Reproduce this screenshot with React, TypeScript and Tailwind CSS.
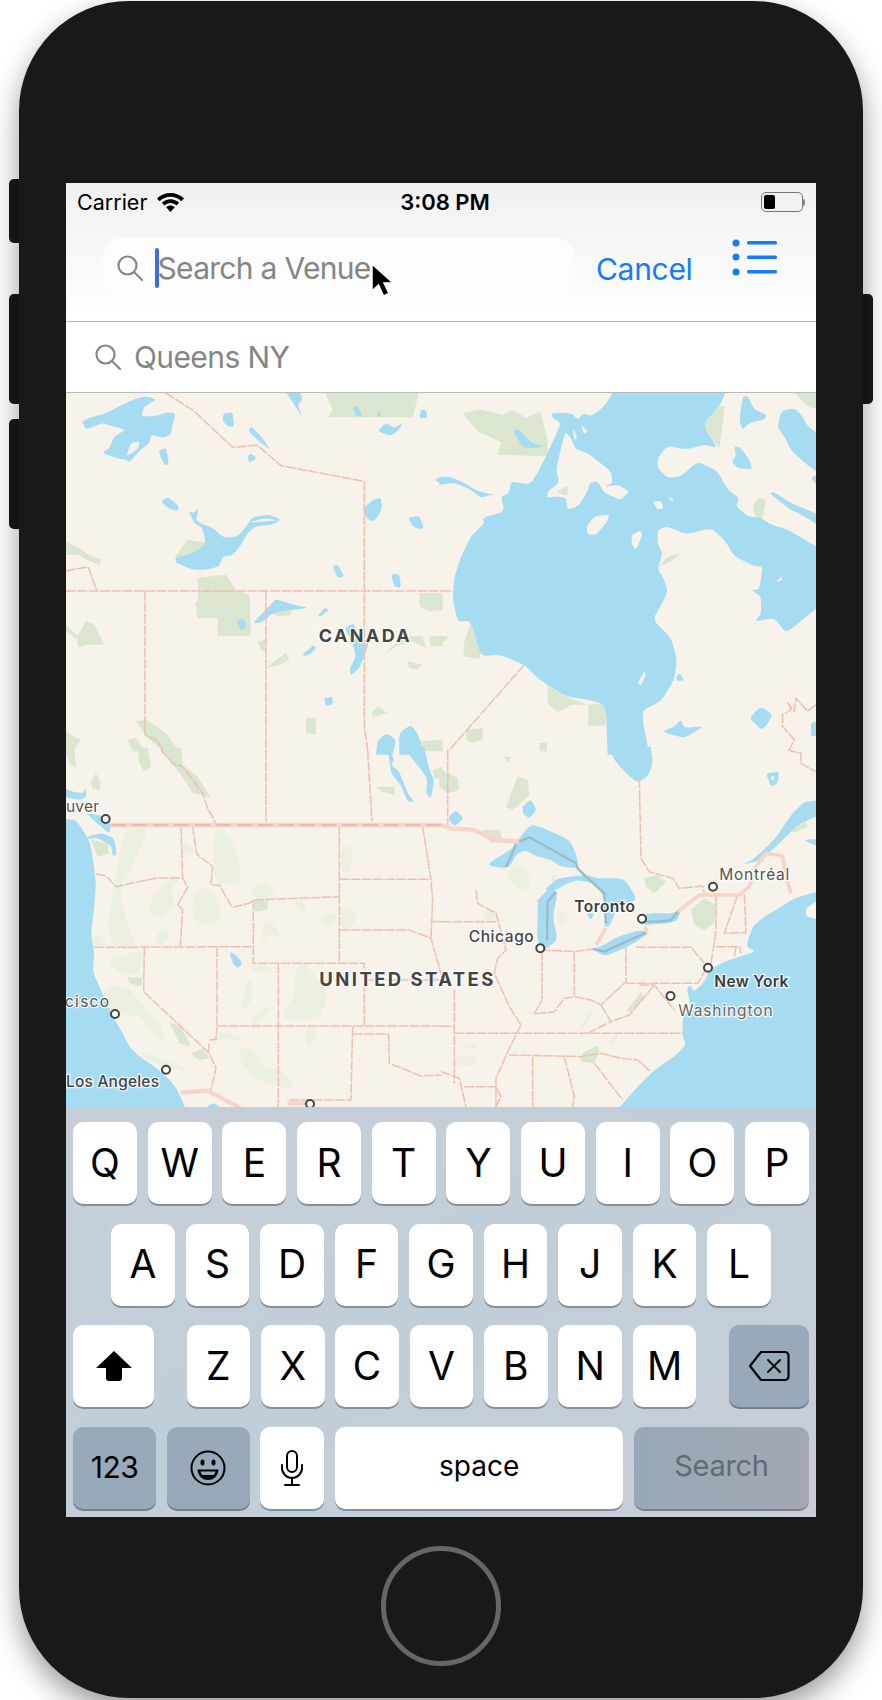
type Quad = {
  dx: number;
  dy: number;
  pale?: string[];
  green?: string[];
  water: string[];
  land?: string[];
  top?: string[];
  lines: string[];
};

// map traced per quadrant, coordinates are 3x the map's pixels
const NW: Quad = {
  dx: 0,
  dy: 0,
  green: [
    "775,-5 1060,-5 1040,73 785,73 800,50",
    "-5,445 40,465 75,490 105,500 100,515 60,500 40,485 -5,485",
    "395,555 480,545 510,590 550,605 555,728 455,728 455,675 395,675 388,630 397,620",
    "-5,690 35,730 60,685 85,695 115,755 65,755 35,762 35,740 -5,710",
    "575,745 600,740 600,780 585,770",
    "600,825 660,780 670,800 640,815",
    "1060,600 1130,600 1130,650 1090,655 1060,640",
    "720,975 750,975 750,1025 720,1020",
    "1090,730 1130,728 1130,760 1095,760",
    "955,785 1010,730 1070,730 1080,765 1040,745 990,760",
    "1025,805 1070,815 1055,830 1030,825",
    "918,960 935,940 965,960 920,972",
    "210,985 240,980 300,1020 340,1075 290,1075 240,1030",
    "185,1040 210,1035 235,1075 200,1075",
    "-5,1010 20,1030 45,1040 20,1075 -5,1075",
    "1060,1045 1130,1040 1130,1075 1070,1075",
    "325,495 365,440 425,450 390,490",
    "620,660 680,650 670,668 630,668",
  ],
  water: [
    "47,85 70,75 120,60 180,30 215,15 245,10 272,20 235,40 225,70 270,70 300,58 328,60 320,95 315,125 290,135 255,125 250,150 225,170 190,208 180,200 160,198 108,180 130,165 145,130 180,110 140,100 110,90 60,110",
    "472,62 500,58 505,100 490,102 470,85",
    "547,115 555,100 590,135 612,170 585,150",
    "545,190 555,182 572,195 550,210",
    "278,172 300,165 305,190 308,215 295,215 285,195",
    "655,-10 700,-10 710,20 695,35 708,72 685,35",
    "285,325 305,312 335,335 338,355 305,345",
    "368,355 385,360 398,345 390,385 440,405 475,435 515,430 545,395 560,372 610,365 645,380 620,395 570,400 545,420 525,455 500,487 470,490 460,520 420,530 380,530 330,510 328,495 380,480 420,455 410,405 385,390",
    "890,350 915,325 945,312 948,350 925,385 905,380",
    "1025,375 1060,368 1075,408 1045,405",
    "800,520 815,515 835,550 815,555",
    "975,545 1000,542 1005,585 985,580",
    "1105,260 1130,250 1130,275",
    "560,690 610,640 630,618 680,635 730,645 680,650 620,660 585,690",
    "755,670 775,645 790,650 765,670",
    "512,680 535,678 542,700 525,715",
    "708,785 745,755 750,770 720,790",
    "835,705 865,690 870,730 910,745 895,790 880,825 855,848 850,830 870,790 860,750",
    "775,915 800,912 800,935 780,940",
    "934,1045 960,1020 990,1040 980,1085 930,1085",
    "1000,1020 1035,995 1060,1030 1070,1085 1000,1085",
    "860,40 875,40 890,70 870,70",
    "938,50 945,70 935,70",
    "1065,50 1080,50 1085,75 1060,75",
    "935,115 960,90 985,105 1010,90 1000,110 975,128",
  ],
  land: ["180,190 195,150 222,145 215,170", "550,388 600,375 635,382 590,386"],
  lines: [
    "300,0 385,55 500,163 575,157 645,218 895,265 895,1000 905,1071",
    "0,594 1125,594",
    "237,594 237,1025 275,1045 290,1071",
    "600,594 600,1071",
    "0,533 67,522 92,594",
  ],
};

const NE: Quad = {
  dx: 375,
  dy: 0,
  green: [
    "65,60 120,50 185,65 215,50 255,75 298,55 318,135 322,190 170,185 180,148 110,115",
    "785,95 835,40 852,40 835,165",
    "1055,-5 1130,-5 1130,50 1100,40",
    "935,340 950,315 975,320 965,375 945,375",
    "68,755 90,685 120,770 115,798 68,790",
    "-5,730 25,730 -5,760",
    "320,880 375,910 440,935 495,930 495,998 442,998 442,935 390,935 350,958 320,930",
    "75,1010 125,1005 125,1040 90,1050 75,1040",
    "295,1050 318,1050 318,1075 295,1075",
  ],
  water: [
    "525,-15 490,40 450,70 430,60 410,80 390,60 335,60 330,70 360,90 345,125 320,180 290,240 265,275 210,265 205,300 180,310 190,355 125,375 130,390 90,430 65,480 40,550 35,620 50,685 90,685 120,790 175,785 250,815 290,855 325,880 375,910 440,920 495,935 500,1085 625,1085 600,955 660,925 700,860 708,800 690,735 635,680 670,620 680,590 665,550 650,530 665,480 650,455 650,410 680,400 735,425 810,405 850,440 880,490 940,520 965,520 955,590 930,590 960,610 960,665 940,685 1000,675 1035,720 1085,680 1145,630 1145,470 1090,440 1040,410 990,395 960,375 920,370 885,340 895,315 860,290 830,235 770,205 720,250 680,255 650,225 650,195 680,158 735,170 790,155 830,165 785,95 835,40 860,-15",
    "985,300 1000,298 1050,330 1145,370 1145,405 1090,370 1040,345",
    "905,10 920,10 940,50 978,65 970,80 925,90 905,110 895,85",
    "880,160 900,165 925,200 935,230 890,225 872,205 885,190",
    "1020,55 1060,45 1085,70 1100,100 1145,130 1145,250 1085,205 1050,170 1030,130 1010,105",
    "1110,255 1130,245 1130,280",
    "-5,255 25,250 70,270 110,295 190,312 150,305 120,315 90,290 40,270 -5,275",
    "925,975 960,940 995,965 975,1000 960,1010",
    "665,1015 700,1000 720,980 730,1005 790,1000 730,1035 690,1025",
    "1110,990 1130,985 1130,1030 1110,1030",
    "705,855 715,840 730,862 710,865",
  ],
  land: [
    "372,115 390,135 405,170 440,180 510,235 515,270 490,282 530,275 565,295 540,322 490,300 470,265 445,270 440,295 412,340 380,350 375,315 345,310 318,315 320,295 355,270 345,230",
    "395,105 410,135 400,140",
    "420,95 440,115 430,122",
    "437,400 460,370 505,365 500,385 465,425 440,425",
    "572,425 600,412 603,430 585,470 572,455",
    "635,325 660,325 668,345 650,350",
    "678,310 698,320 695,328",
    "1005,565 1025,550 1020,565",
    "590,870 610,835 615,845 600,878",
  ],
  top: [
    "345,295 380,278 380,310",
    "650,525 680,490 718,482 690,505",
    "215,110 235,110 270,150 310,160 290,165 245,165",
  ],
  lines: [
    "250,815 25,1071",
    "0,594 35,594",
    "1125,935 1100,955 1065,915 1060,955 1040,930 1050,950 1025,965 1025,1000 1060,1040 1045,1071",
  ],
};

const SW: Quad = {
  dx: 0,
  dy: 357,
  pale: [
    "175,230 245,230 235,270 205,330 185,380 160,410 175,500 205,580 225,600 175,600 135,580 125,520 140,430 150,370",
    "355,270 380,290 385,310 345,320",
    "445,230 480,240 510,300 530,390 505,400 440,400",
    "240,480 290,400 325,375 345,385 310,420 330,460 280,510",
    "380,440 420,400 450,440 470,505 410,530 380,500",
    "75,550 110,560 120,590 85,590",
    "265,560 300,530 315,570 270,590",
    "130,630 190,610 230,600 225,660 190,680 130,650",
    "550,410 610,400 630,440 565,450",
    "680,450 715,450 720,490 690,470",
    "760,510 810,480 810,525 770,530",
    "820,470 850,480 880,490 850,540 825,540",
    "825,285 865,290 850,370 825,370",
    "590,510 620,520 650,565 610,550 575,590 590,570",
    "550,640 610,650 620,665 560,665",
    "680,690 710,620 730,660 790,730 770,780 760,800 720,810 650,810 650,780 690,740",
    "715,830 755,830 745,880 720,890",
    "540,690 560,695 560,760 520,780 535,730",
    "545,815 610,760 615,785 570,825",
    "425,880 460,840 535,865 530,880 480,860 450,880",
    "510,900 560,890 590,960 640,950 690,1020 650,1010 590,1000 540,960",
    "105,720 180,700 240,780 290,830 300,880 270,860 220,790 170,800 130,760",
    "215,900 260,920 360,950 350,965 290,945 240,930",
  ],
  green: [
    "215,-5 245,-5 255,50 235,65 220,40",
    "-5,-5 25,-5 30,55 10,40",
    "75,95 90,70 105,100 100,120 80,115",
    "285,-5 345,-5 350,45 395,80 435,145 410,135 380,130 350,80 310,30",
    "930,110 985,110 985,135 950,125",
    "1100,60 1130,50 1130,90 1105,85",
    "75,270 125,280 130,310 95,320",
    "565,450 605,450 605,480 565,485",
    "185,680 230,685 225,710 190,700",
    "310,815 345,830 375,890 340,880",
    "375,910 410,895 430,925 400,930",
  ],
  water: [
    "-15,205 30,210 70,270 80,320 90,400 85,470 75,550 85,610 80,665 105,720 135,790 170,850 190,890 220,920 280,960 330,1010 365,1090 -15,1090",
    "-5,115 20,125 50,130 58,115 62,140 40,150 15,145 -5,140",
    "60,190 95,195 120,200 135,225 130,250 105,230",
    "65,258 110,250 145,265 152,315 140,318 135,285 90,262 70,268",
    "490,605 510,615 530,640 515,655 500,640",
    "965,-10 985,30 975,45 1000,65 1025,130 1045,155 1025,155 1005,105 975,70",
    "1010,-10 1075,-10 1090,60 1105,90 1095,145 1080,130 1085,85 1050,40",
    "425,1065 450,1060 470,1085 430,1085",
  ],
  lines: [
    "90,372 120,378 150,410 270,384 350,384 365,412 335,465 350,480 343,590",
    "345,228 350,384",
    "380,228 392,312 440,350 435,405 460,405 498,472 550,460 562,450 820,440",
    "820,228 820,640",
    "820,388 1090,388",
    "820,540 1030,540 1095,565 1125,670",
    "1070,228 1095,388 1100,450 1095,565",
    "1100,515 1125,515",
    "562,450 562,640 895,640 895,830",
    "85,592 560,590",
    "235,592 233,725 430,910 450,955 435,1020",
    "453,592 453,828",
    "453,828 1125,828",
    "637,640 637,1071",
    "860,830 855,1050 665,1050",
    "860,852 968,852 970,940 1065,978 1125,975",
    "600,0 600,215",
    "905,0 918,215",
    "285,0 320,40 350,50 410,130 425,175 450,220",
    "430,880 425,915",
    "430,870 450,868 453,830",
    "895,690 1125,690",
  ],
};

const SE: Quad = {
  dx: 375,
  dy: 357,
  pale: [
    "205,345 260,345 270,430 200,400",
    "340,365 350,390 325,400",
    "345,470 380,500 370,525 350,525",
    "130,470 160,490 165,510 130,515",
    "410,840 460,765 450,800 425,840",
    "60,880 110,880 110,895 60,895",
    "40,920 110,915 100,945 50,950",
    "500,885 520,850 540,835 515,885",
  ],
  green: [
    "750,480 790,445 825,465 820,520 790,540 760,525",
    "610,385 650,375 675,395 640,430 615,410",
    "195,170 230,80 260,90 265,135 215,180",
    "-5,55 50,85 55,120 20,130 -5,110",
    "125,240 175,240 185,265 150,280",
    "190,20 210,20 200,40",
    "555,785 600,725 610,750 565,785",
    "425,910 470,885 475,905 460,940 420,935",
    "1045,240 1095,215 1100,230 1060,248",
  ],
  water: [
    "1145,420 1060,445 1005,480 970,500 935,530 915,590 945,605 880,625 840,640 805,660 790,695 760,725 745,705 738,720 750,770 725,800 725,860 735,885 700,920 640,960 590,1010 520,1090 1145,1090",
    "505,-10 630,-10 635,40 620,80 590,98 555,70 520,30",
    "245,170 270,148 287,180 265,205 245,190",
    "20,205 45,180 68,205 40,230",
    "975,70 1015,65 1010,100 990,110",
    "1145,150 1090,155 1050,195 1000,270 940,325 905,345 960,330 1020,275 1070,225 1145,190",
    "1145,265 1085,270 1145,295",
    "135,345 215,295 235,265 270,222 320,240 385,270 400,300 410,330 410,355 360,350 330,330 290,320 250,300 225,315 205,350 190,355",
    "290,460 335,420 350,430 335,500 350,570 310,600 288,570 290,510",
    "285,455 325,415 345,420 300,465",
    "310,420 350,385 400,378 440,375 470,385 550,385 590,450 530,470 520,495 505,530 490,530 490,440 460,400 410,390 370,405 345,420",
    "455,595 480,590 530,560 600,540 625,550 560,590 490,620",
    "590,510 620,490 690,490 720,480 710,510 680,520 610,525",
    "435,490 460,490 450,510",
  ],
  land: ["1145,440 1095,475 1095,500 1145,510", "988,80 1002,78 996,94"],
  lines: [
    "20,0 20,225",
    "595,85 600,325 625,365 695,385 715,415 785,408 790,430",
    "825,440 825,545 810,640",
    "890,435 850,550 915,548 910,430",
    "825,590 895,590 900,610",
    "885,590 880,622",
    "0,515 165,515",
    "105,420 110,460 165,490 195,600 170,625 160,670 205,770 240,825",
    "300,600 400,605 455,597",
    "303,600 303,750 280,792 340,785 370,745 400,740 450,750 480,765 555,695 555,590",
    "585,592 750,592 790,640",
    "555,700 770,700 800,650",
    "595,705 640,705 700,780",
    "400,605 400,740",
    "480,765 510,815 565,795 640,705",
    "440,850 510,815",
    "240,825 205,895 165,985 165,1071",
    "40,850 725,850",
    "0,828 40,830",
    "40,720 40,1000",
    "205,915 420,920 480,910 540,925 590,930 630,965",
    "275,920 275,1071",
    "370,920 400,1040 395,1071",
    "460,940 545,1050",
    "0,965 55,985 75,1071",
    "70,1010 165,1010 180,1040 165,1071",
    "1040,0 1080,10 1080,40 1125,65",
  ],
};

const CITIES = [
  [39.7, 426],
  [474.3, 555.3],
  [576, 525.7],
  [647, 493.7],
  [642, 574.7],
  [604.5, 603],
  [49, 621],
  [100, 676.7],
  [244, 711],
];

const ROW_1 = ["Q", "W", "E", "R", "T", "Y", "U", "I", "O", "P"];
const ROW_2 = ["A", "S", "D", "F", "G", "H", "J", "K", "L"];
const ROW_3 = ["Z", "X", "C", "V", "B", "N", "M"];

// rounds the corners of a traced shape, points off the map stay sharp
const smooth = (points: string, t: number) => {
  const pts = points.split(" ").map((p) => p.split(",").map(Number));
  const off = (p: number[]) => p[0] < 0 || p[0] > 1125 || p[1] < 0 || p[1] > 1071;
  const lerp = (a: number[], b: number[], k: number) => `${a[0] + (b[0] - a[0]) * k} ${a[1] + (b[1] - a[1]) * k}`;
  let d = "";
  pts.forEach((p, i) => {
    const prev = pts[(i - 1 + pts.length) % pts.length];
    const next = pts[(i + 1) % pts.length];
    if (off(p)) {
      d += `${d ? "L" : "M"}${p[0]} ${p[1]}`;
    } else {
      d += `${d ? "L" : "M"}${lerp(p, prev, t)}Q${p[0]} ${p[1]} ${lerp(p, next, t)}`;
    }
  });
  return d + "Z";
};

const Soft = ({ items, fill, t }: { items?: string[]; fill: string; t: number }) => (
  <>
    {items?.map((p) => (
      <path key={p} d={smooth(p, t)} fill={fill} />
    ))}
  </>
);

const Lines = ({ items, stroke, width, dash }: { items: string[]; stroke: string; width: number; dash?: string }) => (
  <>
    {items.map((p) => (
      <polyline
        key={p}
        points={p}
        fill="none"
        stroke={stroke}
        strokeWidth={width}
        strokeDasharray={dash}
        strokeLinejoin="round"
      />
    ))}
  </>
);

const Layer = ({ q }: { q: Quad }) => (
  <g transform={`translate(${q.dx} ${q.dy}) scale(0.3333)`}>
    <Soft items={q.pale} fill="#ebf0e0" t={0.5} />
    {q.green?.map((p) => (
      <polygon key={p} points={p} fill="#dae6cf" />
    ))}
    <Soft items={q.water} fill="#a5dcf2" t={0.28} />
    <Soft items={q.land} fill="#f7f2ea" t={0.28} />
  </g>
);

const LayerLines = ({ q }: { q: Quad }) => (
  <g transform={`translate(${q.dx} ${q.dy}) scale(0.3333)`}>
    {q.top?.map((p, i) => (
      <path key={p} d={smooth(p, 0.28)} fill={i === 2 ? "#a5dcf2" : "#dae6cf"} />
    ))}
    <Lines items={q.lines} stroke="#efbfb2" width={4.5} dash="30 4" />
  </g>
);

const Label = ({ x, y, size, weight, fill, width, children }: any) => (
  <text
    x={x}
    y={y}
    fontFamily="Inter, sans-serif"
    fontSize={size}
    fontWeight={weight}
    fill={fill}
    textLength={width}
    stroke="#ffffff"
    strokeOpacity={0.85}
    strokeWidth={2.5}
    paintOrder="stroke"
  >
    {children}
  </text>
);

const MapView = () => (
  <svg width="750" height="714" viewBox="0 0 750 714" className="block shrink-0">
    <rect width="750" height="714" fill="#f7f2ea" />
    <Layer q={NW} />
    <Layer q={NE} />
    <Layer q={SW} />
    <Layer q={SE} />
    <LayerLines q={NW} />
    <LayerLines q={NE} />
    <LayerLines q={SW} />
    <LayerLines q={SE} />
    {/* border with the States, grey where it runs through the lakes */}
    <g transform="translate(0 357) scale(0.3333)" fill="none">
      <Lines items={["135,225 1125,225 1155,235 1225,240 1285,270 1360,275", "345,1028 425,1022 525,1075", "665,1060 725,1060"]} stroke="#f7d3c9" width={13} />
      <Lines items={["135,225 1125,225"]} stroke="#eeb0a4" width={4} dash="45 18" />
    </g>
    <g transform="translate(375 357) scale(0.3333)" fill="none">
      <Lines items={["710,485 775,435 895,435 925,410 945,350 975,310 1025,318 1035,380 1050,430", "465,585 495,535", "610,530 620,545"]} stroke="#f7d3c9" width={11} />
      <Lines
        items={[
          "235,275 265,262 405,340 410,355 435,380 490,430 495,520",
          "455,597 490,605 615,548",
          "600,515 650,515 690,510 710,485",
          "345,425 320,455 318,570",
          "225,280 210,320 195,350",
        ]}
        stroke="#9fb9c9"
        width={7}
      />
    </g>
    {CITIES.map(([x, y]) => (
      <circle key={x} cx={x} cy={y} r={4} fill="#ffffff" stroke="#444444" strokeWidth={2} />
    ))}
    <Label x={252.7} y={249} size={18} weight={700} fill="#444444" width={91}>CANADA</Label>
    <Label x={253.3} y={593} size={18.5} weight={700} fill="#444444" width={174}>UNITED STATES</Label>
    <Label x={402.7} y={548.7} size={15.5} weight={500} fill="#444444" width={65}>Chicago</Label>
    <Label x={508.3} y={519.3} size={15.5} weight={600} fill="#3a3a3a" width={60.7}>Toronto</Label>
    <Label x={653.3} y={487} size={15.5} weight={400} fill="#555555" width={70}>Montréal</Label>
    <Label x={648.3} y={593.7} size={15.5} weight={600} fill="#3a3a3a" width={74}>New York</Label>
    <Label x={612.3} y={622.7} size={15.5} weight={400} fill="#666666" width={94.3}>Washington</Label>
    <Label x={0} y={693.7} size={15.5} weight={500} fill="#444444" width={93}>Los Angeles</Label>
    <Label x={-1} y={614.3} size={15.5} weight={400} fill="#555555" width={44}>cisco</Label>
    <Label x={0} y={418.7} size={15.5} weight={400} fill="#555555" width={33}>uver</Label>
  </svg>
);

const SearchIcon = () => (
  <svg width="26" height="26" viewBox="0 0 26 26" fill="none" stroke="#868686" strokeWidth="2.2" strokeLinecap="round" className="shrink-0">
    <circle cx="10.5" cy="10.5" r="9" />
    <path d="M17 17l8 8" />
  </svg>
);

const Key = ({ label }: { label: string }) => (
  <div className="flex-1 flex items-center justify-center h-full bg-white rounded-[10px] shadow-[0_2px_0_#868e96]">
    <span className="text-[39px] leading-none text-black pb-[2px]">{label}</span>
  </div>
);

export default function App() {
  return (
    <div className="relative w-[882px] h-[1700px] bg-white overflow-hidden font-[Inter,sans-serif]">
      {/* side buttons */}
      <div className="absolute left-[9px] top-[179px] w-[12px] h-[64px] bg-[#191919] rounded-l-[5px]" />
      <div className="absolute left-[9px] top-[294px] w-[12px] h-[110px] bg-[#191919] rounded-l-[5px]" />
      <div className="absolute left-[9px] top-[419px] w-[12px] h-[110px] bg-[#191919] rounded-l-[5px]" />
      <div className="absolute left-[861px] top-[294px] w-[12px] h-[110px] bg-[#191919] rounded-r-[5px]" />

      <div className="relative ml-[19px] mt-[1px] w-[844px] h-[1697px] bg-[#191919] rounded-[110px] shadow-[0_12px_28px_rgba(0,0,0,0.4)] pt-[182px]">
        <div className="relative mx-auto w-[750px] h-[1334px] flex flex-col overflow-hidden bg-white">
          {/* nav */}
          <div className="h-[139px] shrink-0 bg-gradient-to-b from-[#f0f0f0] to-white border-b border-[#b9b9bc]">
            <div className="grid grid-cols-3 items-center h-[38px] pl-[11px] pr-[11px] text-[21.5px] text-black">
              <div className="flex items-center gap-[10px]">
                <span>Carrier</span>
                <svg width="27" height="19" viewBox="0 0 27 19" fill="#000">
                  <path d="M13.5 0C8.3 0 3.7 2 0 5.4l2.6 2.8C5.600 5.400 9.300 3.700 13.500 3.700s7.900 1.700 10.900 4.500L27 5.400C23.300 2 18.700 0 13.500 0z" />
                  <path d="M13.500 6.300c-3.300 0-6.300 1.300-8.600 3.400l2.600 2.800c1.600-1.500 3.700-2.400 6-2.400s4.400.9 6 2.400l2.600-2.800c-2.300-2.100-5.300-3.400-8.600-3.400z" />
                  <path d="M13.500 12.600c-1.700 0-3.200.7-4.300 1.700l4.300 4.700 4.300-4.700c-1.100-1-2.600-1.700-4.300-1.700z" />
                </svg>
              </div>
              <div className="text-center text-[22px] font-semibold pl-[8px]">3:08 PM</div>
              <div className="flex justify-end items-center">
                <div className="w-[42px] h-[20px] rounded-[5px] border border-[#777] p-[2px]">
                  <div className="w-[11px] h-full bg-black rounded-[2px]" />
                </div>
                <div className="w-[2px] h-[7px] bg-[#888] rounded-r-[2px]" />
              </div>
            </div>
            <div className="relative flex items-start mt-[17px] ml-[37px]">
              <div className="flex items-center w-[472px] h-[64px] bg-[#fdfdfd] rounded-[20px] pl-[14px] pb-[4px]">
                <SearchIcon />
                <div className="w-[3.500px] h-[40px] ml-[12px] bg-[#3a6ee8] rounded-full" />
                <span className="-ml-[1px] text-[30px] leading-none tracking-[-0.7px] text-[#858585]">Search a Venue</span>
              </div>
              <span className="ml-[21px] mt-[11px] text-[30px] leading-[40px] tracking-[-0.3px] text-[#157bfb]">Cancel</span>
              <svg width="45" height="38" viewBox="0 0 45 38" fill="#157bfb" className="ml-[39px]">
                <circle cx="4" cy="5" r="3.500" />
                <circle cx="4" cy="19" r="3.500" />
                <circle cx="4" cy="34" r="3.500" />
                <rect x="15" y="3" width="30" height="3.500" rx="1.500" />
                <rect x="15" y="17.500" width="30" height="3.500" rx="1.500" />
                <rect x="15" y="32" width="30" height="3.500" rx="1.500" />
              </svg>
              {/* mouse pointer from the simulator */}
              <svg width="28" height="38" viewBox="0 0 28 38" className="absolute left-[267px] top-[24px]">
                <path d="M2 2v27l6.500-6 5 11 5.500-2.500-5-10.500h9z" fill="#000" stroke="#fff" strokeWidth="1.500" />
              </svg>
            </div>
          </div>

          {/* location row */}
          <div className="h-[71px] shrink-0 flex items-center gap-[13px] pl-[29px] bg-white border-b border-[#b9b9bc]">
            <SearchIcon />
            <span className="text-[30px] leading-none tracking-[-0.6px] text-[#858585]">Queens NY</span>
          </div>

          <MapView />

          {/* keyboard */}
          <div className="flex-1 flex flex-col gap-[19.500px] px-[7px] pt-[15px] bg-gradient-to-br from-[#c6cfd8] via-[#c0ced9] to-[#c9ced8]">
            <div className="flex gap-[10.670px] h-[82px]">
              {ROW_1.map((k) => (
                <Key key={k} label={k} />
              ))}
            </div>
            <div className="flex gap-[10.670px] h-[82px] px-[38px]">
              {ROW_2.map((k) => (
                <Key key={k} label={k} />
              ))}
            </div>
            <div className="flex justify-between h-[82px]">
              <div className="flex items-center justify-center w-[81px] h-full bg-white rounded-[10px] shadow-[0_2px_0_#868e96]">
                <svg width="36" height="30" viewBox="0 0 36 30" fill="#000">
                  <path d="M18 0L36 17H26V27a3 3 0 0 1-3 3H13a3 3 0 0 1-3-3V17H0z" />
                </svg>
              </div>
              <div className="flex gap-[10.670px] w-[510px] h-full">
                {ROW_3.map((k) => (
                  <Key key={k} label={k} />
                ))}
              </div>
              <div className="flex items-center justify-center w-[80px] h-full bg-[#98a9b9] rounded-[10px] shadow-[0_2px_0_#737f8b]">
                <svg width="42" height="32" viewBox="0 0 42 32" fill="none" stroke="#000" strokeWidth="2.200" strokeLinejoin="round" strokeLinecap="round">
                  <path d="M13 2h24a3.500 3.500 0 0 1 3.500 3.500v21a3.500 3.500 0 0 1-3.500 3.500H13L2 16z" />
                  <path d="M20 10l12 12M32 10L20 22" strokeWidth="1.800" />
                </svg>
              </div>
            </div>
            <div className="flex gap-[10.670px] h-[82px]">
              <div className="flex items-center justify-center w-[83px] bg-[#98a9b9] rounded-[10px] shadow-[0_2px_0_#737f8b]">
                <span className="text-[30px] tracking-[-0.5px] text-black">123</span>
              </div>
              <div className="flex items-center justify-center w-[83px] bg-[#98a9b9] rounded-[10px] shadow-[0_2px_0_#737f8b]">
                <svg width="36" height="36" viewBox="0 0 36 36" fill="none" stroke="#000" strokeWidth="2">
                  <circle cx="18" cy="18" r="16.500" />
                  <ellipse cx="12.500" cy="12.500" rx="2" ry="3" fill="#000" stroke="none" />
                  <ellipse cx="23.500" cy="12.500" rx="2" ry="3" fill="#000" stroke="none" />
                  <path d="M7.500 19.500h21C28 27 23 30 18 30S8 27 7.500 19.500z" fill="#000" stroke="none" />
                  <path d="M10.500 21.500h15c-.500 2-1.500 3-2 3.500h-11c-.500-.500-1.500-1.500-2-3.500z" fill="#98a9b9" stroke="none" />
                </svg>
              </div>
              <div className="flex items-center justify-center w-[64px] bg-white rounded-[10px] shadow-[0_2px_0_#868e96]">
                <svg width="24" height="36" viewBox="0 0 24 36" fill="none" stroke="#000" strokeWidth="2" strokeLinecap="round">
                  <rect x="7" y="1" width="10" height="21" rx="5" />
                  <path d="M2 15v3a10 10 0 0 0 20 0v-3M12 28v6M5 35h14" />
                </svg>
              </div>
              <div className="flex-1 flex items-center justify-center bg-white rounded-[10px] shadow-[0_2px_0_#868e96]">
                <span className="text-[28px] text-black pb-[4px]">space</span>
              </div>
              <div className="flex items-center justify-center w-[175px] bg-gradient-to-r from-[#98a8b8] to-[#a3a8b2] rounded-[10px] shadow-[0_2px_0_#77808b]">
                <span className="text-[29px] tracking-[-0.3px] text-[#636b74] pb-[4px]">Search</span>
              </div>
            </div>
          </div>
        </div>

        {/* home button */}
        <div className="mx-auto mt-[29px] w-[120px] h-[120px] rounded-full border-[5px] border-[#666666]" />
      </div>
    </div>
  );
}
